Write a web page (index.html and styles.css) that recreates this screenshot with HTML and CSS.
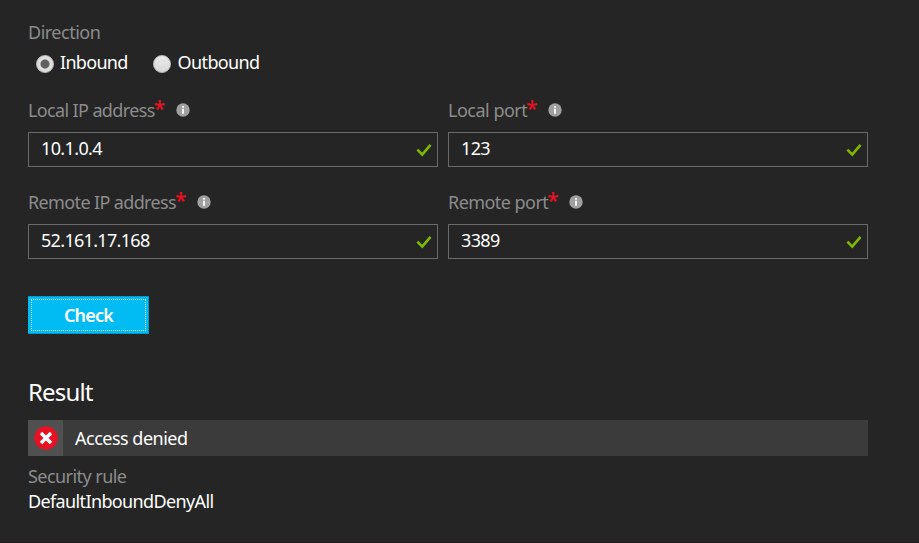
FILE: index.html
```html
<!DOCTYPE html>
<html lang="en">
<head>
<meta charset="utf-8">
<title>IP flow verify</title>
<link rel="stylesheet" href="styles.css">
</head>
<body>
<svg width="0" height="0" class="sprite" aria-hidden="true">
  <symbol id="info" viewBox="0 0 14 14"><circle cx="7" cy="7" r="6.7" fill="#a0a0a0"/><path d="M6.1 3h1.8v1.7H6.1zM6.1 5.8h1.8v5H6.1z" fill="#fff"/></symbol>
  <symbol id="tick" viewBox="0 0 16 14"><path d="M1.4 6.7 6.2 11.6 14.5 1.8" fill="none" stroke="#7fba00" stroke-width="2.6"/></symbol>
</svg>
<main class="blade">
  <div class="label direction"><span class="t-direction">Direction</span></div>
  <div class="radios">
    <span class="radio on"></span><span class="option t-inbound">Inbound</span>
    <span class="radio second"></span><span class="option t-outbound">Outbound</span>
  </div>
  <div class="fields">
    <div class="field">
      <div class="label"><span class="t-local-ip">Local IP address</span><b class="star">*</b><svg class="info"><use href="#info"/></svg></div>
      <div class="input"><span class="t-ip1">10.1.0.4</span><svg class="tick"><use href="#tick"/></svg></div>
    </div>
    <div class="field">
      <div class="label"><span class="t-local-port">Local port</span><b class="star">*</b><svg class="info"><use href="#info"/></svg></div>
      <div class="input"><span class="t-num">123</span><svg class="tick"><use href="#tick"/></svg></div>
    </div>
    <div class="field">
      <div class="label"><span class="t-remote-ip">Remote IP address</span><b class="star">*</b><svg class="info"><use href="#info"/></svg></div>
      <div class="input"><span class="t-ip2">52.161.17.168</span><svg class="tick"><use href="#tick"/></svg></div>
    </div>
    <div class="field">
      <div class="label"><span class="t-remote-port">Remote port</span><b class="star">*</b><svg class="info"><use href="#info"/></svg></div>
      <div class="input"><span class="t-num">3389</span><svg class="tick"><use href="#tick"/></svg></div>
    </div>
  </div>
  <div class="check"><span class="check-text">Check</span></div>
  <h2 class="result"><span class="t-result">Result</span></h2>
  <div class="status">
    <div class="status-icon"><svg width="24" height="24" viewBox="0 0 24 24"><circle cx="12" cy="12" r="11.7" fill="#e81123"/><path d="M7 7l10 10M17 7 7 17" stroke="#fff" stroke-width="3.5"/></svg></div>
    <span class="status-text">Access denied</span>
  </div>
  <div class="label rule"><span class="t-rule">Security rule</span></div>
  <div class="rule-name"><span class="t-name">DefaultInboundDenyAll</span></div>
</main>
</body>
</html>
```
FILE: styles.css
```css
* { box-sizing: border-box; }
body {
  margin: 0;
  height: 543px;
  overflow: hidden;
  background: #252525;
  border-bottom: 1px solid #1f1b1f;
  color: #fff;
  font: 18px/24px "Noto Sans", "Segoe UI", sans-serif;
}
.sprite { display: block; }
.blade { padding: 20px 0 0 28px; width: 868px; }
.label { display: flex; align-items: center; height: 24px; color: #8c8c8c; white-space: nowrap; }
.radios { display: flex; align-items: center; height: 24px; margin-top: 6px; padding-left: 8px; }
.radio {
  width: 18px;
  height: 18px;
  margin-top: 4px;
  border: 1px solid #bdbdbd;
  border-radius: 50%;
  background: linear-gradient(#e9e9e9, #d9d9d9);
}
.radio.on { background: radial-gradient(circle, #606060 0 4px, #dedede 5px); }
.radio.second { margin-left: 25px; }
.option { margin-left: 6px; }
.radio.second + .option { margin-left: 7px; }
.fields { display: grid; grid-template-columns: 410px 420px; column-gap: 10px; row-gap: 23px; margin-top: 24px; }
.field { height: 69px; }
.field .input { margin-top: 10px; }
.input {
  display: flex;
  align-items: center;
  justify-content: space-between;
  height: 35px;
  padding: 0 5px 3px 12px;
  border: 1px solid #6a6a6a;
}
.star { width: 10px; margin: -4px 0 0 -1px; color: #e81123; font-size: 21px; font-weight: 500; }
.info { width: 14px; height: 14px; margin: -1px 0 0 12px; }
.tick { width: 16px; height: 14px; margin-top: 3px; }
.check {
  width: 121px;
  height: 38px;
  margin-top: 37px;
  padding: 2px;
  border: 1px solid #0499c8;
  border-left-color: #00bcf2;
  border-radius: 1px;
  background: #00bcf2;
  font-weight: 600;
}
.check-text { display: block; height: 32px; border: 1px dotted #e8faff; line-height: 30px; text-align: center; letter-spacing: -0.8px; }
.result { height: 32px; margin: 42px 0 0; font-size: 24px; line-height: 31px; font-weight: 400; letter-spacing: -0.85px; }
.status { display: flex; align-items: center; height: 36px; margin-top: 12px; background: #3b3b3b; }
.status-icon { display: flex; align-items: center; justify-content: center; width: 35px; height: 36px; background: #505050; }
.status-icon svg { margin-top: -1px; }
.status-text { margin-left: 12px; letter-spacing: -0.5px; }
.rule { margin-top: 8px; }
.rule-name { margin-top: 1px; }
.t-direction, .t-local-port { letter-spacing: -0.5px; }
.t-remote-port, .t-rule { letter-spacing: -0.55px; }
.t-inbound { letter-spacing: -0.7px; }
.t-outbound, .t-ip1, .t-num { letter-spacing: -0.63px; }
.t-local-ip, .t-remote-ip, .t-name { letter-spacing: -0.63px; }
.t-ip2 { letter-spacing: -0.68px; }
```
